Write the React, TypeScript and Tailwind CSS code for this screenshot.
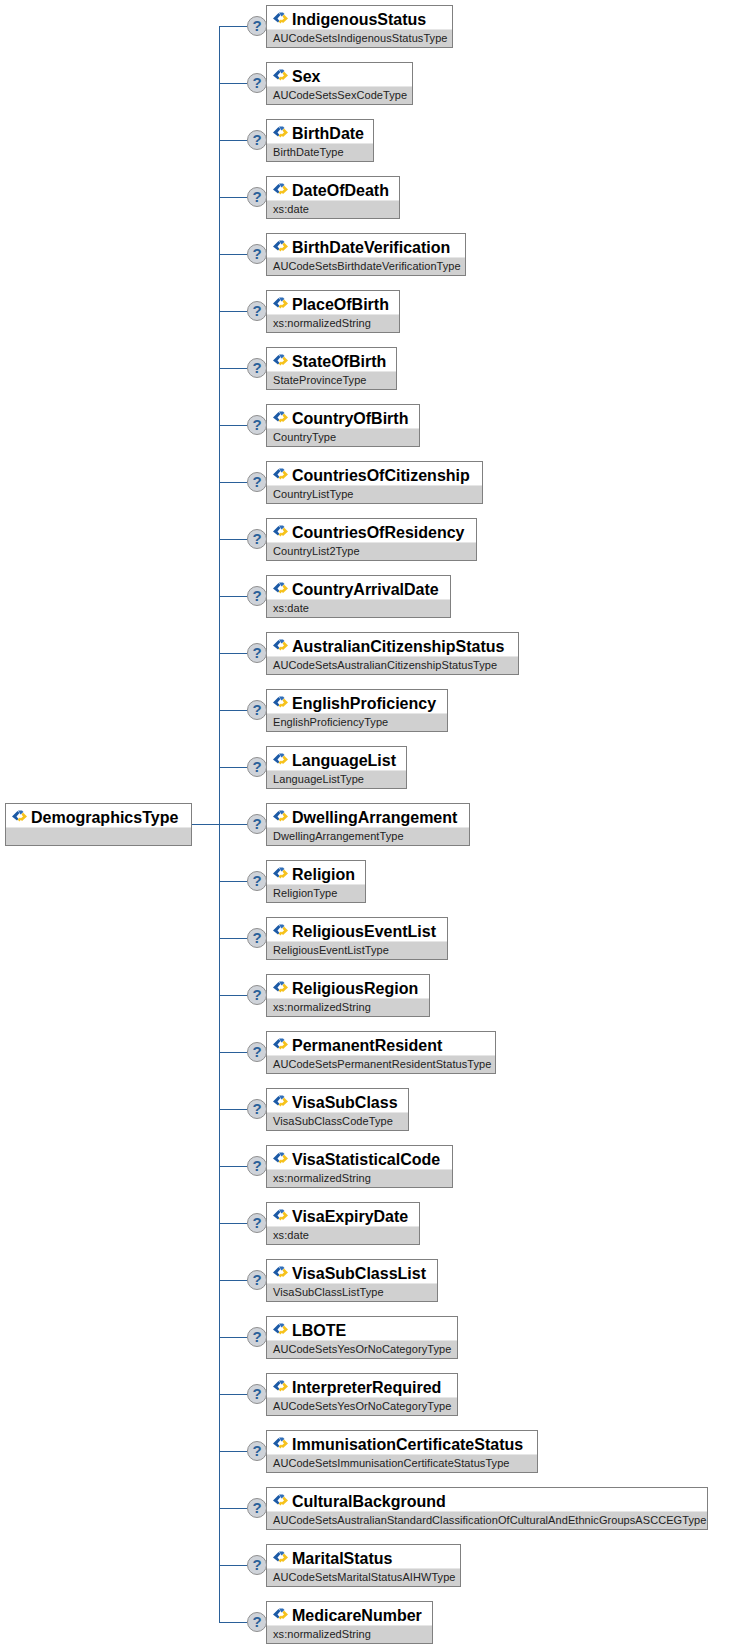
import React from 'react';

interface ElementRow {
  name: string;
  type: string;
  widthClass: string;
}

const rows: ElementRow[] = [
  { name: 'IndigenousStatus', type: 'AUCodeSetsIndigenousStatusType', widthClass: 'w-[187px]' },
  { name: 'Sex', type: 'AUCodeSetsSexCodeType', widthClass: 'w-[147px]' },
  { name: 'BirthDate', type: 'BirthDateType', widthClass: 'w-[108px]' },
  { name: 'DateOfDeath', type: 'xs:date', widthClass: 'w-[134px]' },
  { name: 'BirthDateVerification', type: 'AUCodeSetsBirthdateVerificationType', widthClass: 'w-[200px]' },
  { name: 'PlaceOfBirth', type: 'xs:normalizedString', widthClass: 'w-[134px]' },
  { name: 'StateOfBirth', type: 'StateProvinceType', widthClass: 'w-[131px]' },
  { name: 'CountryOfBirth', type: 'CountryType', widthClass: 'w-[154px]' },
  { name: 'CountriesOfCitizenship', type: 'CountryListType', widthClass: 'w-[217px]' },
  { name: 'CountriesOfResidency', type: 'CountryList2Type', widthClass: 'w-[211px]' },
  { name: 'CountryArrivalDate', type: 'xs:date', widthClass: 'w-[185px]' },
  { name: 'AustralianCitizenshipStatus', type: 'AUCodeSetsAustralianCitizenshipStatusType', widthClass: 'w-[253px]' },
  { name: 'EnglishProficiency', type: 'EnglishProficiencyType', widthClass: 'w-[182px]' },
  { name: 'LanguageList', type: 'LanguageListType', widthClass: 'w-[141px]' },
  { name: 'DwellingArrangement', type: 'DwellingArrangementType', widthClass: 'w-[204px]' },
  { name: 'Religion', type: 'ReligionType', widthClass: 'w-[100px]' },
  { name: 'ReligiousEventList', type: 'ReligiousEventListType', widthClass: 'w-[182px]' },
  { name: 'ReligiousRegion', type: 'xs:normalizedString', widthClass: 'w-[164px]' },
  { name: 'PermanentResident', type: 'AUCodeSetsPermanentResidentStatusType', widthClass: 'w-[230px]' },
  { name: 'VisaSubClass', type: 'VisaSubClassCodeType', widthClass: 'w-[143px]' },
  { name: 'VisaStatisticalCode', type: 'xs:normalizedString', widthClass: 'w-[187px]' },
  { name: 'VisaExpiryDate', type: 'xs:date', widthClass: 'w-[154px]' },
  { name: 'VisaSubClassList', type: 'VisaSubClassListType', widthClass: 'w-[172px]' },
  { name: 'LBOTE', type: 'AUCodeSetsYesOrNoCategoryType', widthClass: 'w-[192px]' },
  { name: 'InterpreterRequired', type: 'AUCodeSetsYesOrNoCategoryType', widthClass: 'w-[192px]' },
  { name: 'ImmunisationCertificateStatus', type: 'AUCodeSetsImmunisationCertificateStatusType', widthClass: 'w-[272px]' },
  { name: 'CulturalBackground', type: 'AUCodeSetsAustralianStandardClassificationOfCulturalAndEthnicGroupsASCCEGType', widthClass: 'w-[442px]' },
  { name: 'MaritalStatus', type: 'AUCodeSetsMaritalStatusAIHWType', widthClass: 'w-[195px]' },
  { name: 'MedicareNumber', type: 'xs:normalizedString', widthClass: 'w-[167px]' },
];

// blue and yellow diamond in front of every element name
const ElementIcon = () => (
  <svg width="15" height="12" viewBox="0 0 15 12" className="shrink-0">
    <path d="M0 6.5 L5.5 1 L7.5 3 L4.5 6.5 L6.5 9 L5 10.5 Z" fill="#1c5aa6" />
    <path d="M6 0.5 L10 0.5 L11.5 2 L8.5 4.5 Z" fill="#2f6db8" />
    <path d="M11 2.5 L15 6.5 L10 11 L8 9 L11 6.5 L9.5 4.5 Z" fill="#f6c21c" />
    <path d="M5.5 9.5 L8 7.5 L9.5 9 L7.5 11.5 Z" fill="#f6c21c" />
  </svg>
);

const HelpIcon = () => (
  <div className="z-10 -mr-[1px] flex h-[20px] w-[20px] shrink-0 items-center justify-center rounded-full border border-[#8f8f8f] bg-[#cfd3d9] text-[15px] font-bold text-[#2a6099]">
    ?
  </div>
);

const TypeBox = ({ name, type, widthClass }: ElementRow) => (
  <div className={`${widthClass} h-[43px] shrink-0 border border-[#808080] bg-white`}>
    <div className="flex h-[23px] items-center gap-[4px] pl-[6px] pt-[5px] text-[16px] font-bold leading-none text-black">
      <div className="-mt-[3px]">
        <ElementIcon />
      </div>
      <span className="whitespace-nowrap">{name}</span>
    </div>
    <div className="h-[18px] whitespace-nowrap border-t border-[#e6e6e6] bg-[#d0d0d0] pl-[6px] text-[11px] leading-[16px] tracking-[0.07px] text-[#222222]">
      {type}
    </div>
  </div>
);

export default function App() {
  return (
    <div className="flex h-[1648px] w-[730px] items-center overflow-hidden bg-white pl-[5px] font-['Liberation_Sans',Arial,sans-serif]">
      <TypeBox name="DemographicsType" type="" widthClass="w-[187px]" />
      <div className="h-px w-[27px] shrink-0 bg-[#2a6099]" />
      <div className="relative flex flex-col gap-[14px]">
        <div className="absolute bottom-[21px] left-0 top-[21px] w-px bg-[#2a6099]" />
        {rows.map((row) => (
          <div key={row.name} className="flex items-center">
            <div className="h-px w-[28px] shrink-0 bg-[#2a6099]" />
            <HelpIcon />
            <TypeBox {...row} />
          </div>
        ))}
      </div>
    </div>
  );
}
